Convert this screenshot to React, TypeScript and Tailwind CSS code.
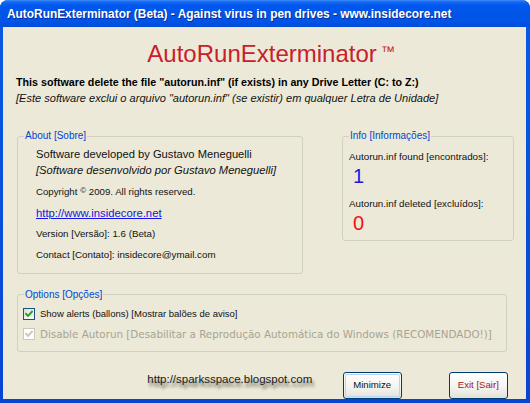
import React from "react";

function Check({ color }: { color: string }) {
  return (
    <svg width="8" height="8" viewBox="0 0 8 8">
      <path d="M1 3.8 L3 5.8 L7 1.6" fill="none" stroke={color} strokeWidth="1.9" strokeLinecap="square" />
    </svg>
  );
}

export default function App() {
  return (
    <div className="w-[530px] h-[403px] bg-white [font-family:'Liberation_Sans',Arial,sans-serif]">
      <div className="w-[530px] h-[403px] rounded-t-[8px] overflow-hidden flex flex-col bg-[linear-gradient(to_bottom,#0A5AE6,#0845D2)]">
        <div className="h-[27px] shrink-0 flex items-center pl-[7px] bg-[linear-gradient(to_bottom,#3D8DF8_0%,#1266F1_8%,#0058EE_20%,#0055E6_55%,#0055E8_80%,#004BD6_100%)]">
          <span className="text-white font-bold text-[11.9px] leading-[16px] [text-shadow:1px_1px_0_#0A2A9A]">
            AutoRunExterminator (Beta) - Against virus in pen drives - www.insidecore.net
          </span>
        </div>
        <div className="flex-1 ml-[3px] mr-[4px] mb-[4px] bg-[#ECE9D8] flex flex-col text-black">
          <div className="mt-[12px] pl-[13px] h-[24px] leading-[24px] text-[24px] text-center text-[#C8202A]">
            AutoRunExterminator<span className="text-[14px] align-[6px]"> ™</span>
          </div>
          <div className="mt-[10.5px] px-[13px] text-[10.7px] leading-[16px] font-bold">
            This software delete the file "autorun.inf" (if exists) in any Drive Letter (C: to Z:)
          </div>
          <div className="px-[13px] text-[11.05px] leading-[16px] italic text-[#111]">
            [Este software exclui o arquivo "autorun.inf" (se existir) em qualquer Letra de Unidade]
          </div>

          <div className="mt-[24.8px] pl-[13.7px] flex items-start">
            <fieldset className="w-[286px] border border-[#D0D0BF] rounded-[3px]">
              <legend className="ml-[6.3px] px-[1px] text-[10px] leading-[12px] text-[#0046D5]">About [Sobre]</legend>
              <div className="pl-[18.3px] pt-[3.8px] pb-[9.8px] flex flex-col text-[#111]">
                <div className="text-[11.2px] leading-[16px]">Software developed by Gustavo Meneguelli</div>
                <div className="text-[11.2px] leading-[16px] italic">[Software desenvolvido por Gustavo Meneguelli]</div>
                <div className="mt-[5px] text-[9.7px] leading-[16px]">
                  Copyright <span className="text-[8px] align-[2px]">©</span> 2009. All rights reserved.
                </div>
                <div className="mt-[5.2px] text-[11.3px] leading-[16px]">
                  <span className="text-[#1414E6] underline">http://www.insidecore.net</span>
                </div>
                <div className="mt-[5.1px] text-[9.75px] leading-[16px]">Version [Versão]: 1.6 (Beta)</div>
                <div className="mt-[4.4px] text-[9.75px] leading-[16px]">Contact [Contato]: insidecore@ymail.com</div>
              </div>
            </fieldset>

            <fieldset className="ml-[39px] w-[172.6px] border border-[#D0D0BF] rounded-[3px]">
              <legend className="ml-[6.3px] px-[1px] text-[10px] leading-[12px] text-[#0046D5]">Info [Informações]</legend>
              <div className="pl-[6.3px] pt-[6.5px] pb-[7.6px] flex flex-col text-[#111]">
                <div className="text-[9.8px] leading-[16px]">Autorun.inf found [encontrados]:</div>
                <div className="mt-[1.2px] pl-[4px] text-[20px] leading-[20px] text-[#1A1AE0]">1</div>
                <div className="mt-[10.4px] text-[9.8px] leading-[16px]">Autorun.inf deleted [excluídos]:</div>
                <div className="mt-[0.3px] pl-[4px] text-[20px] leading-[20px] text-[#F21010]">0</div>
              </div>
            </fieldset>
          </div>

          <div className="mt-[15px] pl-[13.7px]">
            <fieldset className="w-[490.3px] border border-[#D0D0BF] rounded-[3px]">
              <legend className="ml-[6.3px] px-[1px] text-[10px] leading-[12px] text-[#0046D5]">Options [Opções]</legend>
              <div className="pl-[5px] pt-[5.2px] pb-[8.8px] flex flex-col">
                <div className="h-[16px] flex items-center">
                  <div className="w-[12px] h-[12px] border border-[#1C5180] bg-[linear-gradient(135deg,#DCDCD7,#FFFFFF)] flex items-center justify-center">
                    <Check color="#21A121" />
                  </div>
                  <span className="ml-[5.3px] text-[9.5px] leading-[16px] text-[#111]">Show alerts (ballons) [Mostrar balões de aviso]</span>
                </div>
                <div className="mt-[4px] h-[16px] flex items-center">
                  <div className="w-[12px] h-[12px] border border-[#CAC8BB] bg-white flex items-center justify-center">
                    <Check color="#CAC8BB" />
                  </div>
                  <span className="ml-[5.3px] text-[10.35px] leading-[16px] text-[#A8A492] [font-family:'DejaVu_Sans',Verdana,sans-serif]">
                    Disable Autorun [Desabilitar a Reprodução Automática do Windows (RECOMENDADO!)]
                  </span>
                </div>
              </div>
            </fieldset>
          </div>

          <div className="mt-[20.7px] flex items-start">
            <div className="w-[339.7px] pl-[144.3px] text-[11.5px] leading-[14px] text-[#1A1A1A] [text-shadow:2px_4px_3px_rgba(0,0,0,0.55)] whitespace-nowrap">
              http://sparksspace.blogspot.com
            </div>
            <div className="w-[59px] h-[26.5px] rounded-[3px] border border-[#003C74] bg-[linear-gradient(to_bottom,#FFFFFF,#F3F3EF_60%,#E3E1D7)] p-[1px]">
              <div className="w-full h-full rounded-[2px] border border-[#BCD3F6] flex items-center justify-center text-[9.6px] text-[#111]">
                Minimize
              </div>
            </div>
            <div className="ml-[47.3px] w-[58.7px] h-[26.5px] rounded-[3px] border border-[#003C74] bg-[linear-gradient(to_bottom,#FFFFFF,#F3F3EF_60%,#E3E1D7)] flex items-center justify-center text-[9.6px] text-[#A8141A]">
              Exit [Sair]
            </div>
          </div>
        </div>
      </div>
    </div>
  );
}
